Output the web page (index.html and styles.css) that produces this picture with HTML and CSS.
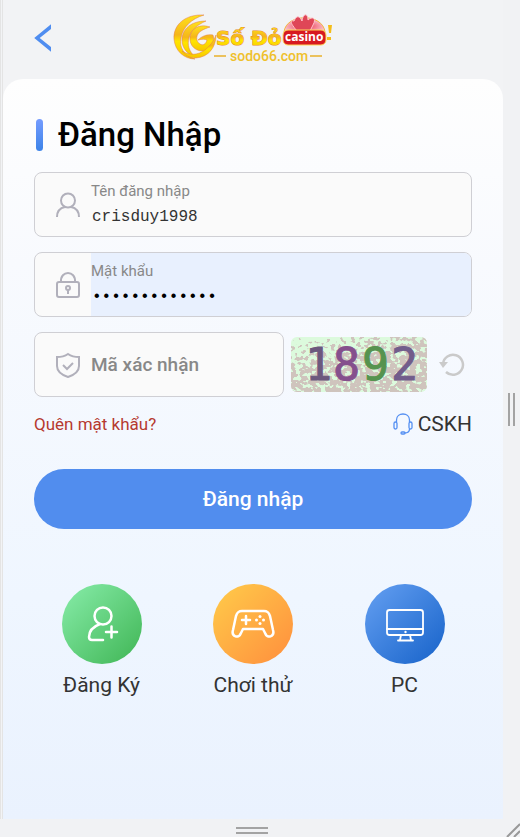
FILE: index.html
```html
<!DOCTYPE html>
<html lang="vi">
<head>
  <meta charset="UTF-8">
  <meta name="viewport" content="width=device-width, initial-scale=1.0">
  <title>Đăng Nhập</title>
  <link rel="stylesheet" href="styles.css">
</head>
<body>
  <div class="phone">
    <header class="header">
      <a class="back" href="#" aria-label="Back">
        <svg width="17" height="28" viewBox="0 0 17 28"><path d="M19 1 3 14l16 13" fill="none" stroke="#4f8df0" stroke-width="3.500"/></svg>
      </a>
      <svg class="logo" width="160" height="52" viewBox="0 -2 160 52" role="img">
        <defs>
          <linearGradient id="gold" x1="0" y1="0" x2="0" y2="1">
            <stop offset="0" stop-color="#ffe21a"/>
            <stop offset=".45" stop-color="#f5b51b"/>
            <stop offset=".6" stop-color="#ffe500"/>
            <stop offset="1" stop-color="#f6c400"/>
          </linearGradient>
          <radialGradient id="fan" cx=".5" cy=".6" r=".6">
            <stop offset="0" stop-color="#e8304a"/>
            <stop offset="1" stop-color="#ffdce0"/>
          </radialGradient>
        </defs>
        <!-- swirl -->
        <g stroke="#e07a4a" stroke-width=".5" fill="url(#gold)">
          <path d="M31 1C12 0 0 11 1 25c1 12 10 20 21 20C11 41 6 34 8 24 10 13 18 5 31 1Z"/>
          <path d="M33 7C18 7 9 15 9 26c0 8 5 14 13 17-6-6-8-12-6-19 2-8 8-13 17-17Z"/>
          <path d="M37 13c-12-4-21 3-20 13 1 9 10 13 17 10 6-3 8-9 6-15-6-1-11 1-15 5 4-1 7-1 9 0-1 4-4 6-7 4-5-3-4-10 1-13 3-2 6-3 9-4Z"/>
          <path d="M43 21c0 12-7 22-20 23-7 0-11-3-14-7 8 5 16 4 23-1 5-4 9-9 11-15Z"/>
        </g>
        <text class="logo-name" x="43" y="31">Số Đỏ</text>
        <path d="M111 18C113-1 150-1 152 18Z" fill="url(#fan)" stroke="#f3b63f"/>
        <path d="M124 17c-7-8-7-11-3-10 3-7 6-4 8 0 1-8 6-8 6-1 4-4 9-2 5 5l-3 6Z" fill="#df4657" stroke="#ffc4cb"/>
        <rect x="110" y="16" width="43" height="15" rx="5" fill="#d71920" stroke="#ffd85a"/>
        <text class="logo-casino" x="112" y="27">casino</text>
        <path d="M155 11h4l-1 8h-2ZM154 23h4v3h-4Z" fill="#f4bd19"/>
        <path d="M41 42h12M137 42h12" stroke="#e9b12b" stroke-width="1.500"/>
        <text class="logo-site" x="57" y="47">sodo66.com</text>
      </svg>
    </header>

    <main class="card">
      <h1 class="title">Đăng Nhập</h1>

      <form class="login-form">
        <div class="field">
          <svg class="field-icon" viewBox="0 0 26 26"><circle cx="13" cy="8.500" r="7"/><path d="M2 25c0-6 3-9 8-10M16 15c5 1 8 4 8 10"/></svg>
          <div class="field-body">
            <label for="username">Tên đăng nhập</label>
            <input type="text" id="username" value="crisduy1998">
          </div>
        </div>

        <div class="field">
          <svg class="field-icon" viewBox="0 0 26 26"><rect x="2" y="10" width="22" height="15" rx="2"/><path d="M6 10C5-2 21-2 20 10M13 18v4"/><circle cx="13" cy="16" r="2"/></svg>
          <div class="field-body filled">
            <label for="password">Mật khẩu</label>
            <input type="password" id="password" value="crisduy199888">
          </div>
        </div>

        <div class="captcha-row">
          <div class="field">
            <svg class="field-icon" viewBox="0 0 26 26"><path d="M13 2c3 2 7 3 11 3v9c0 5-5 9-11 11C7 23 2 19 2 14V5c4 0 8-1 11-3Z"/><path d="m8 13 4 4 6-6"/></svg>
            <div class="field-body">
              <input class="code" type="text" id="code" placeholder="Mã xác nhận" aria-label="Mã xác nhận">
            </div>
          </div>
          <svg class="captcha" viewBox="0 0 136 55" role="img">
            <defs>
              <linearGradient id="density" x1="0" y1="0" x2=".6" y2="1">
                <stop offset="0" stop-color="#000" stop-opacity=".3"/>
                <stop offset=".5" stop-color="#000" stop-opacity=".55"/>
                <stop offset="1" stop-color="#000" stop-opacity=".6"/>
              </linearGradient>
              <filter id="speckle" x="0" y="0" width="1" height="1" color-interpolation-filters="sRGB">
                <feTurbulence type="fractalNoise" baseFrequency=".2 .25" numOctaves="2" seed="8" result="noise"/>
                <feComposite in="SourceGraphic" in2="noise" operator="arithmetic" k2=".5" k3=".5"/>
                <feColorMatrix values="0 0 0 0 .81  0 0 0 0 .77  0 0 0 0 .74  0 0 0 30 -14.7"/>
              </filter>
            </defs>
            <rect width="136" height="55" fill="#dcfadd"/>
            <rect width="136" height="55" fill="url(#density)" filter="url(#speckle)"/>
            <g class="digits">
              <text x="14" y="43" fill="#6b587d" stroke="#6b587d">1</text>
              <text x="42" y="43" fill="#85508d" stroke="#85508d">8</text>
              <text x="71" y="43" fill="#56934f" stroke="#56934f">9</text>
              <text x="100" y="43" fill="#715d8b" stroke="#715d8b">2</text>
            </g>
          </svg>
          <button class="refresh" type="button" aria-label="Refresh">
            <svg width="26" height="26" viewBox="0 0 26 26"><path d="M4 12a10 10 0 1 1 3 8" fill="none" stroke="#cacaca" stroke-width="2.500"/><path d="M0 10h9l-5 6Z" fill="#cacaca"/></svg>
          </button>
        </div>

        <div class="links">
          <a class="forgot" href="#">Quên mật khẩu?</a>
          <a class="support" href="#">
            <svg width="20" height="22" viewBox="0 0 20 22" fill="none" stroke="#5590f2" stroke-width="1.300"><path d="M3.500 9V7c0-8 13-8 13 0v2M16.500 16c0 3-2 4-5 4"/><rect x="1" y="9" width="3" height="7" rx="1.500"/><rect x="16" y="9" width="3" height="7" rx="1.500"/><rect x="8" y="19" width="4" height="2" rx="1"/></svg>
            CSKH
          </a>
        </div>

        <button class="submit" type="submit">Đăng nhập</button>
      </form>

      <nav class="shortcuts">
        <a href="#">
          <span class="circle green">
            <svg width="40" height="40" viewBox="0 0 40 40"><circle cx="21" cy="12" r="8.500"/><path d="M18 20C10 23 7 27 7 33c0 2 1 3 3 3h11M24 28h11M29.500 22.500v11"/></svg>
          </span>
          Đăng Ký
        </a>
        <a href="#">
          <span class="circle orange">
            <svg width="44" height="40" viewBox="0 0 44 40"><path d="M11 7h22c4 0 5 2 6 5l3 14c2 7-6 9-8 3l-2-4H12l-2 4c-2 6-10 4-8-3l3-14c1-3 2-5 6-5ZM15 12v8M11 16h8"/><g class="dots"><circle cx="29" cy="12.500" r="1.500"/><circle cx="29" cy="19.500" r="1.500"/><circle cx="25.500" cy="16" r="1.500"/><circle cx="32.500" cy="16" r="1.500"/></g></svg>
          </span>
          Chơi thử
        </a>
        <a href="#">
          <span class="circle blue">
            <svg class="thin" width="40" height="40" viewBox="0 0 40 40"><rect x="2" y="6" width="36" height="25" rx="2.500"/><path d="M2 25h36M16 31l-1 5M25 31l1 5M13 36.500h15"/><circle class="dot" cx="20.500" cy="28" r="1.200"/></svg>
          </span>
          PC
        </a>
      </nav>
    </main>
  </div>

  <div class="handle-right"><i></i></div>
  <div class="handle-bottom"><i></i></div>
  <svg class="handle-corner" width="17" height="18" viewBox="0 0 17 18"><path d="M4 18 17 5M11 18l6-6" stroke="#999" stroke-width="2"/></svg>
</body>
</html>
```
FILE: styles.css
```css
* {
  box-sizing: border-box;
}
body {
  display: grid;
  grid-template-columns: 1fr 17px;
  grid-template-rows: 1fr 18px;
  min-height: 100vh;
  margin: 0;
  background: #f1f2f4;
  color: #333333;
  font-family: Roboto, "Noto Sans", sans-serif;
}
a {
  color: inherit;
  text-decoration: none;
}
button {
  padding: 0;
  border: none;
  font-family: inherit;
  cursor: pointer;
}
.phone {
  display: flex;
  flex-direction: column;
  border-left: 3px double #e4e4e4;
  background: #f2f3f5;
}
.header {
  display: grid;
  grid-template-columns: 1fr auto 1fr;
  align-items: center;
  height: 79px;
  padding: 0 31px 3px;
}
.back {
  display: flex;
}
.logo-name {
  font-family: "DejaVu Sans", sans-serif;
  font-size: 20px;
  font-weight: 700;
  fill: url(#gold);
  stroke: #e58a1e;
  stroke-width: 1px;
  paint-order: stroke;
}
.logo-casino {
  font-family: "Open Sans", sans-serif;
  font-size: 12px;
  font-weight: 700;
  fill: #ffffff;
}
.logo-site {
  font-size: 14px;
  font-weight: 500;
  fill: #efc02c;
}

/* Card */
.card {
  flex: 1;
  padding: 36px 31px;
  border-radius: 20px 20px 0 0;
  background: linear-gradient(#fefefe, #f8fafe 25%, #eff6ff 70%, #eaf2fe);
}
.title {
  display: flex;
  align-items: center;
  gap: 15px;
  margin: 0 0 18px 2px;
  color: #000000;
  font-size: 33px;
  font-weight: 500;
  line-height: 39px;
}
.title::before {
  content: "";
  width: 7px;
  height: 32px;
  border-radius: 4px;
  background: linear-gradient(#759cff, #3c83e8);
}

/* Form */
.login-form {
  display: flex;
  flex-direction: column;
  gap: 15px;
}
.field {
  display: flex;
  align-items: center;
  min-width: 0;
  height: 65px;
  overflow: hidden;
  border: 1px solid #cfcfd4;
  border-radius: 8px;
  background: #fafafa;
}
.field-icon {
  flex: none;
  width: 26px;
  height: 26px;
  margin: 0 10px 0 20px;
  fill: none;
  stroke: #b1b0bb;
  stroke-width: 2;
}
.field-body {
  display: flex;
  flex: 1;
  flex-direction: column;
  justify-content: center;
  gap: 4px;
  min-width: 0;
  height: 100%;
}
.filled {
  background: #e8f0fe;
}
.field label {
  color: #888888;
  font-size: 15px;
  line-height: 20px;
}
.field input {
  width: 100%;
  height: 24px;
  padding: 0 1px;
  border: none;
  outline: none;
  background: none;
  color: #333333;
  font-family: "Liberation Mono", monospace;
  font-size: 16px;
}
.field .filled input {
  color: #000000;
}
.field .code {
  padding: 0;
  font-family: inherit;
  font-size: 19px;
  font-weight: 500;
}
.code::placeholder {
  color: #888888;
}
.captcha-row {
  display: flex;
  align-items: center;
}
.captcha-row .field {
  flex: 1;
}
.captcha {
  width: 136px;
  height: 55px;
  margin: 0 12px 0 7px;
  border-radius: 6px;
}
.digits {
  font-family: "DejaVu Sans Mono", monospace;
  font-size: 45px;
  font-weight: 400;
  stroke-width: 1px;
}
.refresh {
  display: flex;
  margin-right: 7px;
  background: none;
}
.links {
  display: flex;
  align-items: center;
  justify-content: space-between;
  height: 24px;
}
.forgot {
  color: #b63a30;
  font-size: 17px;
}
.support {
  display: flex;
  align-items: center;
  gap: 5px;
  font-size: 21px;
}
.submit {
  height: 60px;
  margin-top: 18px;
  border-radius: 30px;
  background: #518dee;
  color: #ffffff;
  font-size: 21px;
  font-weight: 500;
}

/* Shortcuts */
.shortcuts {
  display: flex;
  justify-content: space-between;
  padding: 55px 27px 0;
}
.shortcuts a {
  display: flex;
  flex-direction: column;
  align-items: center;
  gap: 8px;
  width: 81px;
  font-size: 21px;
  line-height: 26px;
  white-space: nowrap;
}
.circle {
  display: flex;
  align-items: center;
  justify-content: center;
  width: 80px;
  height: 80px;
  border-radius: 50%;
}
.circle svg {
  fill: none;
  stroke: #ffffff;
  stroke-width: 2.5;
  stroke-linecap: round;
  stroke-linejoin: round;
}
.circle .thin {
  stroke-width: 1.8;
}
.dots,
.circle .dot {
  fill: #ffffff;
  stroke: none;
}
.green {
  background: linear-gradient(135deg, #88edaa, #3fb554);
}
.orange {
  background: linear-gradient(135deg, #ffcc4a, #ff8e3d);
}
.blue {
  background: linear-gradient(135deg, #65a0f2, #1662c9);
}

/* Resize handles */
.handle-right,
.handle-bottom {
  display: flex;
  align-items: center;
  justify-content: center;
}
.handle-right i {
  width: 7px;
  height: 33px;
  border: solid #a3a3a3;
  border-width: 0 2px;
}
.handle-bottom {
  padding-top: 5px;
}
.handle-bottom i {
  width: 32px;
  height: 7px;
  border: solid #a3a3a3;
  border-width: 2px 0;
}
```
